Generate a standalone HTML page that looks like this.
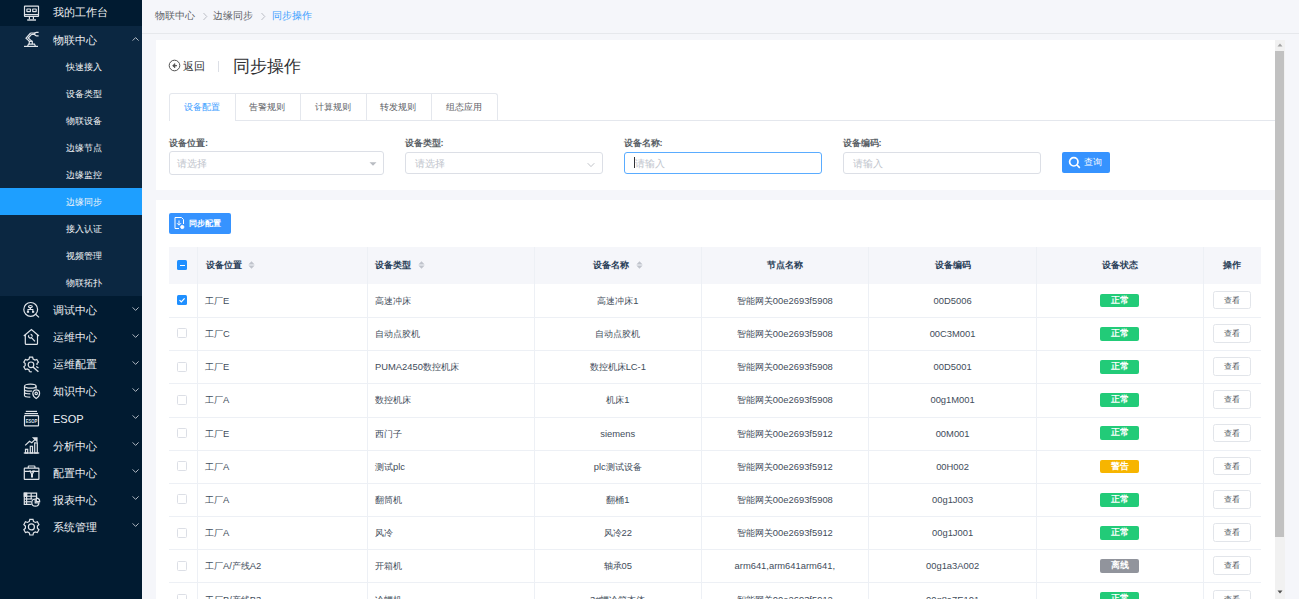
<!DOCTYPE html><html><head><meta charset="utf-8"><style>
*{box-sizing:border-box;margin:0;padding:0}
html,body{width:1299px;height:599px;overflow:hidden}
body{position:relative;background:#f5f6fa;font-family:"Liberation Sans",sans-serif;color:#606266}
.a{position:absolute;white-space:nowrap}
#side{position:absolute;left:0;top:0;width:142px;height:599px;background:#011b31;overflow:hidden}
.mi{position:absolute;left:53px;font-size:11px;line-height:14px;color:#eef0f3}
.si{position:absolute;left:66px;font-size:9.4px;line-height:12px;color:#f4f6f8;font-weight:500}
.ic{position:absolute;left:20px;width:24px;height:24px}
.chev{position:absolute;left:132px;width:8px;height:6px}
.bc{font-size:9.5px;line-height:12px}
.tab{font-size:9.2px;line-height:12px;font-weight:500}
.lab{font-size:9.2px;line-height:12px;font-weight:bold;color:#5a5f66}
.inp{border:1px solid #dcdfe6;border-radius:3px;background:#fff}
.ph{font-size:9.5px;line-height:12px;color:#c0c4cc}
.th{font-size:9.3px;line-height:12px;font-weight:bold;color:#2a4058}
.td{font-size:9.4px;line-height:12px;color:#3f4d5b}
.tag{width:39.3px;height:13.8px;border-radius:2px;color:#fff;font-size:9px;line-height:13.8px;text-align:center;font-weight:bold}
.btn{width:37.6px;height:18.5px;border:1px solid #e2e5ea;border-radius:2.5px;background:#fff;font-size:8.4px;line-height:17.5px;text-align:center;color:#4a5058;font-weight:500}

</style></head><body>
<div id="side">
<div class="a" style="left:0;top:26px;width:142px;height:270px;background:#0b2741"></div>
<div class="a" style="left:0;top:188px;width:142px;height:27px;background:#1e9fff"></div>
<svg class="ic" style="top:0px" viewBox="0 0 24 24" fill="none" stroke="#dfe3e8" stroke-width="1.2"><rect x="4.5" y="6.1" width="14" height="10.2" rx="0.4"/><line x1="4.5" y1="14.6" x2="18.5" y2="14.6"/><rect x="6.9" y="9" width="3.5" height="2.6" rx="0.2"/><rect x="12.7" y="9" width="3.5" height="2.6" rx="0.2"/><line x1="9.4" y1="16.3" x2="9.4" y2="19.3"/><line x1="13.4" y1="16.3" x2="13.4" y2="19.3"/><line x1="7.2" y1="20" x2="16" y2="20" stroke-width="1.4"/></svg>
<div class="mi" style="top:5px">我的工作台</div>
<svg class="ic" style="top:27px" viewBox="0 0 24 24" fill="none" stroke="#dfe3e8" stroke-width="1.2"><line x1="4" y1="19.4" x2="18" y2="19.4"/><path d="M7.6 19.2l.9-2h6l.9 2"/><path d="M9.3 17.2v-2.8h3v2.8"/><path d="M9.5 14.4L6 11.2 10.6 6 M12 14.4L8.2 11 11.8 7.2"/><path d="M10.6 6h3.8 M11.8 7.4h2.6 M14.4 5.6v2.4"/><path d="M18.6 5.4h-2.2a1.2 1.2 0 0 0 0 3.4h2.2"/></svg>
<div class="mi" style="top:33px">物联中心</div>
<svg class="chev" style="top:36px" viewBox="0 0 8 6" fill="none" stroke="#c5cbd3" stroke-width="0.9"><path d="M0.6 4.6 L3.6 1.6 L6.6 4.6"/></svg>
<div class="si" style="top:61.2px">快速接入</div>
<div class="si" style="top:88.2px">设备类型</div>
<div class="si" style="top:115.2px">物联设备</div>
<div class="si" style="top:142.2px">边缘节点</div>
<div class="si" style="top:169.2px">边缘监控</div>
<div class="si" style="top:196.2px">边缘同步</div>
<div class="si" style="top:223.2px">接入认证</div>
<div class="si" style="top:250.2px">视频管理</div>
<div class="si" style="top:277.2px">物联拓扑</div>
<svg class="ic" style="top:298.00px" viewBox="0 0 24 24" fill="none" stroke="#dfe3e8" stroke-width="1.2"><circle cx="10.7" cy="11.4" r="6.9"/><line x1="15.6" y1="16.2" x2="19" y2="19.4"/><ellipse cx="10.4" cy="8.6" rx="1.9" ry="1.1"/><path d="M10.4 9.7v1.6M8 12.8v-1.3h4.8v1.3"/><rect x="6.9" y="12.8" width="2.2" height="2" fill="#dfe3e8" stroke="none"/><rect x="12" y="12.8" width="2.2" height="2" fill="#dfe3e8" stroke="none"/></svg>
<div class="mi" style="top:303.30px">调试中心</div>
<svg class="chev" style="top:306.00px" viewBox="0 0 8 6" fill="none" stroke="#c5cbd3" stroke-width="0.9"><path d="M0.6 1.4 L3.6 4.4 L6.6 1.4"/></svg>
<svg class="ic" style="top:325.06px" viewBox="0 0 24 24" fill="none" stroke="#dfe3e8" stroke-width="1.2"><path d="M3.8 11L11.4 4.6 19 11"/><path d="M5.3 9.8v8.6a1 1 0 0 0 1 1h10.2a1 1 0 0 0 1-1V9.8"/><path d="M8.8 10.2a1.8 1.8 0 0 0 2.6 2.4l3.6 3.8"/><path d="M10.6 9.4a1.8 1.8 0 0 1 1.6 2.2"/></svg>
<div class="mi" style="top:330.36px">运维中心</div>
<svg class="chev" style="top:333.06px" viewBox="0 0 8 6" fill="none" stroke="#c5cbd3" stroke-width="0.9"><path d="M0.6 1.4 L3.6 4.4 L6.6 1.4"/></svg>
<svg class="ic" style="top:352.12px" viewBox="0 0 24 24" fill="none" stroke="#dfe3e8" stroke-width="1.2"><path d="M16.2 14.6l2.3 1.3M9.5 19.8l-.4-1.8-1.9-1.1-1.8.6-1.6-2.6 1.4-1.3v-2.1L3.8 10.2l1.6-2.7 1.8.6 1.9-1.1.4-1.9h3.1l.5 1.9 1.9 1.1 1.8-.6 1.6 2.7-1.4 1.3v1.5"/><circle cx="11" cy="12.8" r="2.8"/><line x1="13" y1="15" x2="18.4" y2="19.8" stroke-width="1.5"/><path d="M9.6 19.8h2.2"/></svg>
<div class="mi" style="top:357.42px">运维配置</div>
<svg class="chev" style="top:360.12px" viewBox="0 0 8 6" fill="none" stroke="#c5cbd3" stroke-width="0.9"><path d="M0.6 1.4 L3.6 4.4 L6.6 1.4"/></svg>
<svg class="ic" style="top:379.18px" viewBox="0 0 24 24" fill="none" stroke="#dfe3e8" stroke-width="1.2"><ellipse cx="10.3" cy="7.2" rx="5.8" ry="2"/><path d="M4.5 7.2v9.4c0 .9 2.6 1.6 5.8 1.6 M16.1 7.2v2.6 M4.5 10.4c0 .9 2.6 1.7 5.8 1.7 .6 0 1.2 0 1.8-.1 M4.5 13.3c0 .9 2.6 1.6 5.8 1.6"/><path d="M16.2 10.9a3.4 3.4 0 0 1 3.4 3.4c0 2.6-1.8 4.3-3.4 5.3-1.6-1-3.4-2.7-3.4-5.3a3.4 3.4 0 0 1 3.4-3.4z"/><circle cx="16.2" cy="14.4" r="1.2"/></svg>
<div class="mi" style="top:384.48px">知识中心</div>
<svg class="chev" style="top:387.18px" viewBox="0 0 8 6" fill="none" stroke="#c5cbd3" stroke-width="0.9"><path d="M0.6 1.4 L3.6 4.4 L6.6 1.4"/></svg>
<svg class="ic" style="top:406.24px" viewBox="0 0 24 24" fill="none" stroke="#dfe3e8" stroke-width="1.2"><line x1="5.8" y1="5.4" x2="17" y2="5.4"/><line x1="4.6" y1="7.6" x2="18" y2="7.6"/><rect x="4.5" y="9.7" width="14" height="10.2" rx="0.5"/><text x="11.5" y="16.8" font-size="5.6" font-family="Liberation Sans" font-weight="bold" fill="#dfe3e8" stroke="none" text-anchor="middle" textLength="11.6" lengthAdjust="spacingAndGlyphs">ESOP</text></svg>
<div class="mi" style="top:411.54px">ESOP</div>
<svg class="chev" style="top:414.24px" viewBox="0 0 8 6" fill="none" stroke="#c5cbd3" stroke-width="0.9"><path d="M0.6 1.4 L3.6 4.4 L6.6 1.4"/></svg>
<svg class="ic" style="top:433.30px" viewBox="0 0 24 24" fill="none" stroke="#dfe3e8" stroke-width="1.2"><line x1="3.8" y1="20" x2="19.2" y2="20" stroke-width="1.3"/><rect x="5.5" y="16.3" width="2.2" height="3.7"/><rect x="10.3" y="13.3" width="2.2" height="6.7"/><rect x="14.7" y="9.9" width="2.6" height="10.1"/><path d="M5.2 12.4l4.3-4.2 2.3 1.5 4-3.9"/><path d="M13.4 4.9h3.6v3.4z" fill="#dfe3e8"/></svg>
<div class="mi" style="top:438.60px">分析中心</div>
<svg class="chev" style="top:441.30px" viewBox="0 0 8 6" fill="none" stroke="#c5cbd3" stroke-width="0.9"><path d="M0.6 1.4 L3.6 4.4 L6.6 1.4"/></svg>
<svg class="ic" style="top:460.36px" viewBox="0 0 24 24" fill="none" stroke="#dfe3e8" stroke-width="1.2"><path d="M8.3 8V6.6a.6.6 0 0 1 .6-.6h5.4a.6.6 0 0 1 .6.6V8"/><rect x="4.3" y="8.2" width="14.6" height="11.2" rx="0.5"/><path d="M4.3 11.4h5.6M13.4 11.4h5.5"/><path d="M9.8 10.4c.2 1.6 1.8 2.6 1.8 4.2v2.4h.8v-2.4c0-1.6 1.6-2.6 1.8-4.2M10 10.6l1.6 1.6 M13.2 10.6l-1.4 1.6"/></svg>
<div class="mi" style="top:465.66px">配置中心</div>
<svg class="chev" style="top:468.36px" viewBox="0 0 8 6" fill="none" stroke="#c5cbd3" stroke-width="0.9"><path d="M0.6 1.4 L3.6 4.4 L6.6 1.4"/></svg>
<svg class="ic" style="top:487.42px" viewBox="0 0 24 24" fill="none" stroke="#dfe3e8" stroke-width="1.2"><path d="M11.6 17.4H4.3V6.2h12.3v5"/><line x1="4.3" y1="9.2" x2="16.6" y2="9.2"/><line x1="4.3" y1="12" x2="12.4" y2="12"/><line x1="4.3" y1="14.8" x2="11.4" y2="14.8"/><line x1="6.6" y1="6.2" x2="6.6" y2="17.4"/><line x1="11.2" y1="6.2" x2="11.2" y2="12"/><rect x="4.3" y="6.2" width="2.3" height="3" fill="#dfe3e8"/><path d="M15.2 12a3.6 3.6 0 1 0 3.8 3.8h-3.8z"/><path d="M16.3 11.2v3.5h3.4a3.5 3.5 0 0 0-3.4-3.5z"/></svg>
<div class="mi" style="top:492.72px">报表中心</div>
<svg class="chev" style="top:495.42px" viewBox="0 0 8 6" fill="none" stroke="#c5cbd3" stroke-width="0.9"><path d="M0.6 1.4 L3.6 4.4 L6.6 1.4"/></svg>
<svg class="ic" style="top:514.48px" viewBox="0 0 24 24" fill="none" stroke="#dfe3e8" stroke-width="1.2"><path d="M9.8 5.3h3.2l.5 2.1 1.8 1.05 2.05-.65 1.6 2.8-1.55 1.5v2.1l1.55 1.5-1.6 2.8-2.05-.65-1.8 1.05-.5 2.1H9.8l-.5-2.1-1.8-1.05-2.05.65-1.6-2.8 1.55-1.5v-2.1l-1.55-1.5 1.6-2.8 2.05.65 1.8-1.05z"/><circle cx="11.4" cy="12.9" r="3"/></svg>
<div class="mi" style="top:519.78px">系统管理</div>
<svg class="chev" style="top:522.48px" viewBox="0 0 8 6" fill="none" stroke="#c5cbd3" stroke-width="0.9"><path d="M0.6 1.4 L3.6 4.4 L6.6 1.4"/></svg>
</div>
<div class="a" style="left:142px;top:0;width:1157px;height:34px;background:#f5f6fa;border-bottom:1px solid #e6e8ec"></div>
<div class="a bc" style="left:155px;top:10.3px;color:#606266">物联中心</div>
<div class="a bc" style="left:213px;top:10.3px;color:#606266">边缘同步</div>
<div class="a bc" style="left:272px;top:10.3px;color:#409eff">同步操作</div>
<svg class="a" style="left:202px;top:12px;width:6px;height:9px" viewBox="0 0 6 9" fill="none" stroke="#b4b8bf" stroke-width="0.9"><path d="M1.5 1 L4.8 4.5 L1.5 8"/></svg>
<svg class="a" style="left:260px;top:12px;width:6px;height:9px" viewBox="0 0 6 9" fill="none" stroke="#b4b8bf" stroke-width="0.9"><path d="M1.5 1 L4.8 4.5 L1.5 8"/></svg>
<div class="a" style="left:156px;top:40px;width:1119px;height:150px;background:#fff"></div>
<svg class="a" style="left:168px;top:59px;width:13px;height:13px" viewBox="0 0 13 13" fill="none" stroke="#4a4a4a" stroke-width="0.95"><circle cx="6.5" cy="6.5" r="5.3"/><path d="M4.6 6.7L6.9 4.5V8.9z" fill="#4a4a4a" stroke-width="0.6"/><path d="M6.5 6.7H9" stroke-width="1.1"/></svg>
<div class="a" style="left:182.5px;top:59px;font-size:11px;line-height:14px;color:#303133">返回</div>
<div class="a" style="left:218px;top:61px;width:1px;height:11px;background:#dcdfe6"></div>
<div class="a" style="left:232.5px;top:55.5px;font-size:17px;line-height:22px;color:#303133">同步操作</div>
<div class="a" style="left:169px;top:119.6px;width:1106px;height:1px;background:#e4e7ed"></div>
<div class="a" style="left:169px;top:93px;width:329px;height:27.6px;border:1px solid #e4e7ed;border-bottom:none;border-radius:3px 3px 0 0"></div>
<div class="a" style="left:170px;top:119.6px;width:65px;height:1px;background:#fff"></div>
<div class="a tab" style="left:169.0px;top:101.2px;width:65.5px;text-align:center;color:#409eff">设备配置</div>
<div class="a" style="left:234.5px;top:93px;width:1px;height:27.6px;background:#e4e7ed"></div>
<div class="a tab" style="left:234.5px;top:101.2px;width:65.5px;text-align:center;color:#606266">告警规则</div>
<div class="a" style="left:300.0px;top:93px;width:1px;height:27.6px;background:#e4e7ed"></div>
<div class="a tab" style="left:300.0px;top:101.2px;width:65.5px;text-align:center;color:#606266">计算规则</div>
<div class="a" style="left:365.5px;top:93px;width:1px;height:27.6px;background:#e4e7ed"></div>
<div class="a tab" style="left:365.5px;top:101.2px;width:65.5px;text-align:center;color:#606266">转发规则</div>
<div class="a" style="left:431.0px;top:93px;width:1px;height:27.6px;background:#e4e7ed"></div>
<div class="a tab" style="left:431.0px;top:101.2px;width:65.5px;text-align:center;color:#606266">组态应用</div>
<div class="a lab" style="left:169px;top:137.2px">设备位置:</div>
<div class="a lab" style="left:404.5px;top:137.2px">设备类型:</div>
<div class="a lab" style="left:623.5px;top:137.2px">设备名称:</div>
<div class="a lab" style="left:842.5px;top:137.2px">设备编码:</div>
<div class="a inp" style="left:169px;top:151px;width:215px;height:24px"></div>
<div class="a ph" style="left:176.5px;top:157.5px">请选择</div>
<svg class="a" style="left:369px;top:162px;width:8px;height:4px" viewBox="0 0 8 4"><path d="M0.5 0.2h7L4 3.8z" fill="#b9bcc2"/></svg>
<div class="a inp" style="left:404.5px;top:152px;width:198.5px;height:22px"></div>
<div class="a ph" style="left:415px;top:157.5px">请选择</div>
<svg class="a" style="left:587px;top:162px;width:8px;height:6px" viewBox="0 0 8 6" fill="none" stroke="#b9bcc2" stroke-width="0.9"><path d="M0.7 1.2 L4 4.6 L7.3 1.2"/></svg>
<div class="a inp" style="left:623.5px;top:152px;width:198.5px;height:22px;border-color:#5aacff"></div>
<div class="a" style="left:634px;top:157px;width:1px;height:11px;background:#303133"></div>
<div class="a ph" style="left:635px;top:157.5px">请输入</div>
<div class="a inp" style="left:842.5px;top:152px;width:198.5px;height:22px"></div>
<div class="a ph" style="left:853px;top:157.5px">请输入</div>
<div class="a" style="left:1061.5px;top:152px;width:48px;height:21px;background:#3693ff;border-radius:2px"></div>
<svg class="a" style="left:1068px;top:156px;width:13px;height:13px" viewBox="0 0 13 13" fill="none" stroke="#fff" stroke-width="1.7"><circle cx="5.8" cy="5.8" r="4.2"/><path d="M9 9l2.8 2.8"/></svg>
<div class="a" style="left:1084px;top:157px;font-size:8.5px;line-height:11px;color:#fff;font-weight:500">查询</div>
<div class="a" style="left:156px;top:200px;width:1119px;height:399px;background:#fff"></div>
<div class="a" style="left:169px;top:213px;width:62px;height:21px;background:#3693ff;border-radius:2px"></div>
<svg class="a" style="left:173px;top:216px;width:12px;height:14px" viewBox="0 0 12 14" fill="none" stroke="#fff" stroke-width="1"><path d="M8.5 1.5H2v11h4"/><path d="M8.5 1.5L10.5 3.5V8"/><path d="M6 4.5v4.5M4 7.2l2 2 2-2"/><circle cx="9.3" cy="11" r="1.6" fill="#fff"/></svg>
<div class="a" style="left:189px;top:218px;font-size:8.2px;line-height:11px;color:#fff;font-weight:bold">同步配置</div>
<div class="a" style="left:169px;top:247px;width:1092px;height:37px;background:#f5f6fa"></div>
<div class="a" style="left:197.0px;top:247px;width:1px;height:352px;background:#edf0f5"></div>
<div class="a" style="left:366.5px;top:247px;width:1px;height:352px;background:#edf0f5"></div>
<div class="a" style="left:534.1px;top:247px;width:1px;height:352px;background:#edf0f5"></div>
<div class="a" style="left:700.5px;top:247px;width:1px;height:352px;background:#edf0f5"></div>
<div class="a" style="left:868.2px;top:247px;width:1px;height:352px;background:#edf0f5"></div>
<div class="a" style="left:1036.0px;top:247px;width:1px;height:352px;background:#edf0f5"></div>
<div class="a" style="left:1203.0px;top:247px;width:1px;height:352px;background:#edf0f5"></div>
<div class="a th" style="left:205.5px;top:259px">设备位置<svg style="display:inline-block;vertical-align:top;margin:1.5px 0 0 6.5px;width:7px;height:8px" viewBox="0 0 7 8"><path d="M3.5 0.3L6.6 3.4H0.4z M3.5 7.7L6.6 4.6H0.4z" fill="#c0c4cc"/></svg></div>
<div class="a th" style="left:375.0px;top:259px">设备类型<svg style="display:inline-block;vertical-align:top;margin:1.5px 0 0 6.5px;width:7px;height:8px" viewBox="0 0 7 8"><path d="M3.5 0.3L6.6 3.4H0.4z M3.5 7.7L6.6 4.6H0.4z" fill="#c0c4cc"/></svg></div>
<div class="a th" style="left:534.6px;top:259px;width:166.4px;text-align:center">设备名称<svg style="display:inline-block;vertical-align:top;margin:1.5px 0 0 6.5px;width:7px;height:8px" viewBox="0 0 7 8"><path d="M3.5 0.3L6.6 3.4H0.4z M3.5 7.7L6.6 4.6H0.4z" fill="#c0c4cc"/></svg></div>
<div class="a th" style="left:701.0px;top:259px;width:167.7px;text-align:center">节点名称</div>
<div class="a th" style="left:868.7px;top:259px;width:167.8px;text-align:center">设备编码</div>
<div class="a th" style="left:1036.5px;top:259px;width:167.0px;text-align:center">设备状态</div>
<div class="a th" style="left:1203.5px;top:259px;width:57.5px;text-align:center">操作</div>
<div class="a" style="left:177px;top:260px;width:10px;height:10px;background:#1f8fff;border-radius:1.5px"></div>
<div class="a" style="left:179.5px;top:264.5px;width:5px;height:1px;background:#fff"></div>
<div class="a" style="left:169px;top:317.0px;width:1092px;height:1px;background:#edf0f5"></div>
<div class="a" style="left:177px;top:295.3px;width:10px;height:10px;background:#1f8fff;border-radius:1.5px"></div>
<svg class="a" style="left:177px;top:295.3px;width:10px;height:10px" viewBox="0 0 10 10" fill="none" stroke="#fff" stroke-width="1.2"><path d="M2.5 5.2L4.3 7 7.6 3.3"/></svg>
<div class="a td" style="left:205px;top:294.9px">工厂E</div>
<div class="a td" style="left:375px;top:294.9px">高速冲床</div>
<div class="a td" style="left:534.6px;top:294.9px;width:166.4px;text-align:center">高速冲床1</div>
<div class="a td" style="left:701.0px;top:294.9px;width:167.7px;text-align:center">智能网关00e2693f5908</div>
<div class="a td" style="left:868.7px;top:294.9px;width:167.8px;text-align:center">00D5006</div>
<div class="a tag" style="left:1100px;top:293.7px;background:#22cb78">正常</div>
<div class="a btn" style="left:1213.2px;top:290.9px">查看</div>
<div class="a" style="left:169px;top:350.2px;width:1092px;height:1px;background:#edf0f5"></div>
<div class="a" style="left:177px;top:328.48px;width:10px;height:10px;border:1px solid #dcdfe6;border-radius:1.5px;background:#fff"></div>
<div class="a td" style="left:205px;top:328.1px">工厂C</div>
<div class="a td" style="left:375px;top:328.1px">自动点胶机</div>
<div class="a td" style="left:534.6px;top:328.1px;width:166.4px;text-align:center">自动点胶机</div>
<div class="a td" style="left:701.0px;top:328.1px;width:167.7px;text-align:center">智能网关00e2693f5908</div>
<div class="a td" style="left:868.7px;top:328.1px;width:167.8px;text-align:center">00C3M001</div>
<div class="a tag" style="left:1100px;top:326.9px;background:#22cb78">正常</div>
<div class="a btn" style="left:1213.2px;top:324.1px">查看</div>
<div class="a" style="left:169px;top:383.4px;width:1092px;height:1px;background:#edf0f5"></div>
<div class="a" style="left:177px;top:361.66px;width:10px;height:10px;border:1px solid #dcdfe6;border-radius:1.5px;background:#fff"></div>
<div class="a td" style="left:205px;top:361.3px">工厂E</div>
<div class="a td" style="left:375px;top:361.3px">PUMA2450数控机床</div>
<div class="a td" style="left:534.6px;top:361.3px;width:166.4px;text-align:center">数控机床LC-1</div>
<div class="a td" style="left:701.0px;top:361.3px;width:167.7px;text-align:center">智能网关00e2693f5908</div>
<div class="a td" style="left:868.7px;top:361.3px;width:167.8px;text-align:center">00D5001</div>
<div class="a tag" style="left:1100px;top:360.1px;background:#22cb78">正常</div>
<div class="a btn" style="left:1213.2px;top:357.3px">查看</div>
<div class="a" style="left:169px;top:416.5px;width:1092px;height:1px;background:#edf0f5"></div>
<div class="a" style="left:177px;top:394.84px;width:10px;height:10px;border:1px solid #dcdfe6;border-radius:1.5px;background:#fff"></div>
<div class="a td" style="left:205px;top:394.4px">工厂A</div>
<div class="a td" style="left:375px;top:394.4px">数控机床</div>
<div class="a td" style="left:534.6px;top:394.4px;width:166.4px;text-align:center">机床1</div>
<div class="a td" style="left:701.0px;top:394.4px;width:167.7px;text-align:center">智能网关00e2693f5908</div>
<div class="a td" style="left:868.7px;top:394.4px;width:167.8px;text-align:center">00g1M001</div>
<div class="a tag" style="left:1100px;top:393.2px;background:#22cb78">正常</div>
<div class="a btn" style="left:1213.2px;top:390.4px">查看</div>
<div class="a" style="left:169px;top:449.7px;width:1092px;height:1px;background:#edf0f5"></div>
<div class="a" style="left:177px;top:428.02px;width:10px;height:10px;border:1px solid #dcdfe6;border-radius:1.5px;background:#fff"></div>
<div class="a td" style="left:205px;top:427.6px">工厂E</div>
<div class="a td" style="left:375px;top:427.6px">西门子</div>
<div class="a td" style="left:534.6px;top:427.6px;width:166.4px;text-align:center">siemens</div>
<div class="a td" style="left:701.0px;top:427.6px;width:167.7px;text-align:center">智能网关00e2693f5912</div>
<div class="a td" style="left:868.7px;top:427.6px;width:167.8px;text-align:center">00M001</div>
<div class="a tag" style="left:1100px;top:426.4px;background:#22cb78">正常</div>
<div class="a btn" style="left:1213.2px;top:423.6px">查看</div>
<div class="a" style="left:169px;top:482.9px;width:1092px;height:1px;background:#edf0f5"></div>
<div class="a" style="left:177px;top:461.2px;width:10px;height:10px;border:1px solid #dcdfe6;border-radius:1.5px;background:#fff"></div>
<div class="a td" style="left:205px;top:460.8px">工厂A</div>
<div class="a td" style="left:375px;top:460.8px">测试plc</div>
<div class="a td" style="left:534.6px;top:460.8px;width:166.4px;text-align:center">plc测试设备</div>
<div class="a td" style="left:701.0px;top:460.8px;width:167.7px;text-align:center">智能网关00e2693f5912</div>
<div class="a td" style="left:868.7px;top:460.8px;width:167.8px;text-align:center">00H002</div>
<div class="a tag" style="left:1100px;top:459.6px;background:#f7b500">警告</div>
<div class="a btn" style="left:1213.2px;top:456.8px">查看</div>
<div class="a" style="left:169px;top:516.1px;width:1092px;height:1px;background:#edf0f5"></div>
<div class="a" style="left:177px;top:494.38px;width:10px;height:10px;border:1px solid #dcdfe6;border-radius:1.5px;background:#fff"></div>
<div class="a td" style="left:205px;top:494.0px">工厂A</div>
<div class="a td" style="left:375px;top:494.0px">翻筒机</div>
<div class="a td" style="left:534.6px;top:494.0px;width:166.4px;text-align:center">翻桶1</div>
<div class="a td" style="left:701.0px;top:494.0px;width:167.7px;text-align:center">智能网关00e2693f5908</div>
<div class="a td" style="left:868.7px;top:494.0px;width:167.8px;text-align:center">00g1J003</div>
<div class="a tag" style="left:1100px;top:492.8px;background:#22cb78">正常</div>
<div class="a btn" style="left:1213.2px;top:490.0px">查看</div>
<div class="a" style="left:169px;top:549.3px;width:1092px;height:1px;background:#edf0f5"></div>
<div class="a" style="left:177px;top:527.56px;width:10px;height:10px;border:1px solid #dcdfe6;border-radius:1.5px;background:#fff"></div>
<div class="a td" style="left:205px;top:527.2px">工厂A</div>
<div class="a td" style="left:375px;top:527.2px">风冷</div>
<div class="a td" style="left:534.6px;top:527.2px;width:166.4px;text-align:center">风冷22</div>
<div class="a td" style="left:701.0px;top:527.2px;width:167.7px;text-align:center">智能网关00e2693f5912</div>
<div class="a td" style="left:868.7px;top:527.2px;width:167.8px;text-align:center">00g1J001</div>
<div class="a tag" style="left:1100px;top:526.0px;background:#22cb78">正常</div>
<div class="a btn" style="left:1213.2px;top:523.2px">查看</div>
<div class="a" style="left:169px;top:582.4px;width:1092px;height:1px;background:#edf0f5"></div>
<div class="a" style="left:177px;top:560.74px;width:10px;height:10px;border:1px solid #dcdfe6;border-radius:1.5px;background:#fff"></div>
<div class="a td" style="left:205px;top:560.3px">工厂A/产线A2</div>
<div class="a td" style="left:375px;top:560.3px">开箱机</div>
<div class="a td" style="left:534.6px;top:560.3px;width:166.4px;text-align:center">轴承05</div>
<div class="a td" style="left:701.0px;top:560.3px;width:167.7px;text-align:center">arm641,arm641arm641,</div>
<div class="a td" style="left:868.7px;top:560.3px;width:167.8px;text-align:center">00g1a3A002</div>
<div class="a tag" style="left:1100px;top:559.1px;background:#91949c">离线</div>
<div class="a btn" style="left:1213.2px;top:556.3px">查看</div>
<div class="a" style="left:169px;top:615.6px;width:1092px;height:1px;background:#edf0f5"></div>
<div class="a" style="left:177px;top:593.92px;width:10px;height:10px;border:1px solid #dcdfe6;border-radius:1.5px;background:#fff"></div>
<div class="a td" style="left:205px;top:593.5px">工厂B/产线B3</div>
<div class="a td" style="left:375px;top:593.5px">冷螺机</div>
<div class="a td" style="left:534.6px;top:593.5px;width:166.4px;text-align:center">3#螺冷箱本体</div>
<div class="a td" style="left:701.0px;top:593.5px;width:167.7px;text-align:center">智能网关00e2693f5912</div>
<div class="a td" style="left:868.7px;top:593.5px;width:167.8px;text-align:center">00g8a7E101</div>
<div class="a tag" style="left:1100px;top:592.3px;background:#22cb78">正常</div>
<div class="a btn" style="left:1213.2px;top:589.5px">查看</div>
<div class="a" style="left:1275px;top:40px;width:10px;height:559px;background:#f1f1f1"></div>
<div class="a" style="left:1275px;top:51px;width:9px;height:486px;background:#c1c1c1"></div>
<svg class="a" style="left:1275px;top:42px;width:10px;height:6px" viewBox="0 0 10 6"><path d="M5 1.5L7.5 4.5H2.5z" fill="#a3a3a3"/></svg>
<svg class="a" style="left:1275px;top:589px;width:10px;height:6px" viewBox="0 0 10 6"><path d="M5 4.5L7.5 1.5H2.5z" fill="#505050"/></svg>
</body></html>
